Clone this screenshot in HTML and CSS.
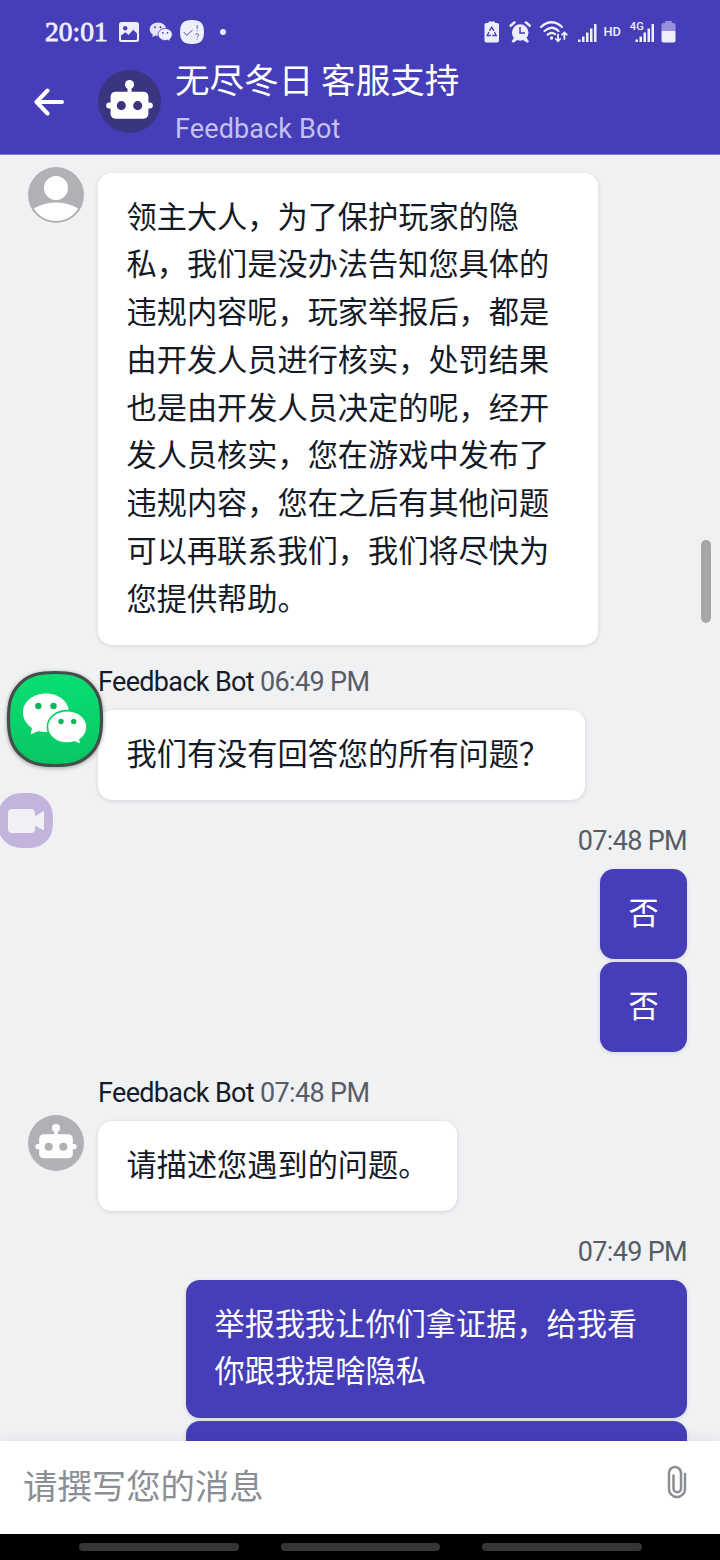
FILE: index.html
```html
<!DOCTYPE html>
<html lang="zh-CN">
<head>
<meta charset="utf-8">
<title>无尽冬日 客服支持</title>
<link rel="stylesheet" href="styles.css">
</head>
<body>
<svg class="defs" width="0" height="0">
  <symbol id="bot" viewBox="0 0 64 64">
    <circle cx="32" cy="32" r="32" fill="currentColor"/>
    <g fill="#fff">
      <circle cx="32" cy="14.8" r="4.6"/>
      <rect x="30" y="15" width="4" height="9"/>
      <rect x="12.8" y="22" width="38.4" height="27.5" rx="5"/>
      <rect x="8.3" y="33" width="47.4" height="6" rx="3"/>
    </g>
    <circle cx="23.7" cy="36.2" r="4.6" fill="currentColor"/>
    <circle cx="40.3" cy="36.2" r="4.6" fill="currentColor"/>
  </symbol>
</svg>
<div class="app">
  <header class="header">
    <div class="status">
      <div class="status-left">
        <span class="clock">20:01</span>
        <svg class="i-photo" width="20" height="20" viewBox="0 0 20 20"><rect width="20" height="20" rx="2.5" fill="#efeefb"/><circle cx="6.2" cy="6.3" r="2.2" fill="#453eb8"/><path d="M2 13.5l4.5-3.2 3 2.6 4.800-5.100 3.700 3.800V17a1 1 0 0 1-1 1H3a1 1 0 0 1-1-1z" fill="#453eb8"/></svg>
        <svg class="i-chat" width="24" height="20" viewBox="0 0 24 20"><path d="M9 .5c4.600 0 8.300 3 8.300 6.800S13.600 14 9 14c-1 0-1.900-.1-2.700-.4L3.300 15.300 3.800 12.500C1.900 11.300.700 9.400.700 7.300.700 3.500 4.400.5 9 .5z" fill="#e5e3f8"/><path d="M16.200 6.500c3.900 0 7.100 2.700 7.100 6 0 1.900-1 3.500-2.500 4.600l.4 2.400-2.600-1.400c-.8.3-1.600.4-2.400.4-3.900 0-7.100-2.700-7.100-6s3.200-6 7.100-6z" fill="#efeefb" stroke="#453eb8" stroke-width=".8"/><g fill="#453eb8"><circle cx="6" cy="5.300" r="1"/><circle cx="11.500" cy="5.300" r="1"/><circle cx="13.900" cy="10.800" r=".9"/><circle cx="18.500" cy="10.800" r=".9"/></g></svg>
        <svg class="i-check" width="24" height="24" viewBox="0 0 24 24"><path d="M12 0C20.500 0 24 3.500 24 12S20.500 24 12 24 0 20.500 0 12 3.500 0 12 0z" fill="#efeefb"/><path d="M3.700 12l3 3.300L12.500 10" fill="none" stroke="#55509f" stroke-width="1"/><path d="M17.200 5v4M17.200 10.300v1M15.300 14.800c.3-1.500 3.500-1.300 3.200.4-.2 1-1.300 1-1.300 2.200M17.200 18.500v1" fill="none" stroke="#55509f" stroke-width=".9"/></svg>
        <i class="dot"></i>
      </div>
      <svg class="status-right" width="196" height="26" viewBox="0 0 196 26">
        <g fill="#efeefb">
          <path d="M8.500 1.500h6.500v1.500h2.300a1.700 1.700 0 0 1 1.700 1.700V20.500a2 2 0 0 1-2 2H6.500a2 2 0 0 1-2-2V4.700a1.700 1.700 0 0 1 1.700-1.700h2.300z"/>
          <circle cx="40.200" cy="12.500" r="8.300"/>
          <path d="M30.600 7l5.200-4.500-1.600-1-4.600 3.800zM49.800 7l-5.200-4.500 1.600-1 4.600 3.800zM34.500 17.500l-2.500 4 1.500.8 4-2.800zM46 17.500l2.500 4-1.500.8-4-2.800z" stroke="#efeefb" stroke-width=".8"/>
        </g>
        <path d="M9.400 10.800l2.300-3.500 2.300 3.500M8.900 12L7.200 15.500h3.600M14.500 12l1.700 3.500h-3.800" fill="none" stroke="#453eb8" stroke-width="1.300"/>
        <path d="M40 7v6h5" fill="none" stroke="#453eb8" stroke-width="1.500"/>
        <g fill="none" stroke="#efeefb" stroke-width="2.200" stroke-linecap="round">
          <path d="M61 7q10.500-9.500 21 0M64.500 11q7.500-6.500 14 0M67.700 14.700q4-3.300 7.300-.5"/>
          <path d="M78 14.500v6.500M75.800 19l2.200 2.300 2.200-2.300M84.400 19v-6.500M82.100 14.700l2.300-2.300 2.300 2.300" stroke-width="1.800"/>
        </g>
        <circle cx="71.500" cy="18" r="1.700" fill="#efeefb"/>
        <g fill="#efeefb">
          <rect x="98" y="19.500" width="2.500" height="2.500"/><rect x="102" y="16.500" width="2.500" height="5.500"/><rect x="106" y="12.500" width="2.500" height="9.500"/><rect x="110" y="8.500" width="2.500" height="13.500"/><rect x="114" y="4" width="2.500" height="18"/>
          <rect x="155.500" y="19.500" width="2.500" height="2.500"/><rect x="159.500" y="16.500" width="2.500" height="5.500"/><rect x="163.500" y="12.500" width="2.500" height="9.500"/><rect x="167.500" y="8.500" width="2.500" height="13.500"/><rect x="171.500" y="4" width="2.500" height="18"/>
          <path d="M181.500 11h14v9.500a2 2 0 0 1-2 2H183.500a2 2 0 0 1-2-2z"/>
        </g>
        <path d="M185.300 1h6.500V3h2a1.800 1.800 0 0 1 1.700 1.800V11H181.500V4.800a1.800 1.800 0 0 1 1.800-1.800H185.300z" fill="#9691da"/>
        <text class="net" x="123.500" y="16" font-size="12.800">HD</text>
        <text class="net" x="149.800" y="10" font-size="11.200">4G</text>
      </svg>
    </div>
    <div class="title-bar">
      <svg class="back" width="30" height="28" viewBox="0 0 30 28"><path d="M28 14H3M13.500 2.500L2.500 14l11 11.500" fill="none" stroke="#fff" stroke-width="4" stroke-linecap="round" stroke-linejoin="round"/></svg>
      <svg class="head-bot"><use href="#bot"/></svg>
      <div class="titles">
        <h1 class="title">无尽冬日 客服支持</h1>
        <p class="subtitle">Feedback Bot</p>
      </div>
    </div>
  </header>

  <main class="chat">
    <section class="group first">
      <svg class="avatar" viewBox="0 0 56 56"><defs><clipPath id="c"><circle cx="28" cy="28" r="26"/></clipPath></defs><circle cx="28" cy="28" r="28" fill="#afb1b5"/><circle cx="28" cy="21" r="12" fill="#fff"/><ellipse cx="28" cy="54" rx="30" ry="18.500" fill="#fff" clip-path="url(#c)"/></svg>
      <div class="bubble long">领主大人，为了保护玩家的隐<br>私，我们是没办法告知您具体的<br>违规内容呢，玩家举报后，都是<br>由开发人员进行核实，处罚结果<br>也是由开发人员决定的呢，经开<br>发人员核实，您在游戏中发布了<br>违规内容，您在之后有其他问题<br>可以再联系我们，我们将尽快为<br>您提供帮助。</div>
    </section>
    <section class="group-in second">
      <div class="meta"><span class="name">Feedback Bot</span> 06:49 PM</div>
      <div class="bubble question">我们有没有回答您的所有问题？</div>
    </section>
    <section class="group-out">
      <div class="meta">07:48 PM</div>
      <div class="bubble mine">否</div>
      <div class="bubble mine">否</div>
    </section>
    <section class="group-in">
      <div class="meta"><span class="name">Feedback Bot</span> 07:48 PM</div>
      <div class="row">
        <svg class="avatar bot-avatar"><use href="#bot"/></svg>
        <div class="bubble describe">请描述您遇到的问题。</div>
      </div>
    </section>
    <section class="group-out">
      <div class="meta">07:49 PM</div>
      <div class="bubble mine wide">举报我我让你们拿证据，给我看<br>你跟我提啥隐私</div>
      <div class="bubble mine wide"></div>
    </section>
  </main>

  <footer class="composer">
    <span class="placeholder">请撰写您的消息</span>
    <svg class="clip" width="20" height="34" viewBox="0 0 20 34"><path d="M18 9v15a8 8 0 0 1-16 0V8a6 6 0 0 1 12 0v15.500a3.200 3.200 0 0 1-7.500 0V10.500" fill="none" stroke="#8b8e93" stroke-width="2.500" stroke-linecap="round"/></svg>
  </footer>
  <nav class="nav"><i></i><i></i><i></i></nav>

  <i class="scroll-thumb"></i>
  <svg class="float-wechat" width="112" height="112" viewBox="0 0 112 112">
    <defs><linearGradient id="g" x1="0" y1="0" x2="0" y2="1"><stop offset="0" stop-color="#08e073"/><stop offset="1" stop-color="#09c663"/></linearGradient></defs>
    <path d="M56 9.500C72 9.500 82.200 11.800 91.200 20.800S102.500 40 102.500 56 100.200 82.200 91.200 91.200 72 102.500 56 102.500 29.800 100.200 20.800 91.200 9.500 72 9.500 56 11.800 29.800 20.800 20.800 40 9.500 56 9.500z" fill="url(#g)" stroke="#464c49" stroke-width="3.200"/>
    <path d="M47 30.500c13 0 23 8.300 23 19S60 69 47 69c-2.700 0-5.300-.4-7.600-1.100L31.500 71.500l1.500-6.600C27.300 61.200 24 55.800 24 49.500c0-10.700 10-19 23-19z" fill="#fff"/>
    <path d="M68.200 47.700c11.300 0 19.800 7.300 19.800 16.200 0 5.200-2.700 9.700-7 12.700l1.300 5.200-6.700-2.800c-2.300.7-4.800 1.100-7.400 1.100-11.300 0-19.800-7.300-19.800-16.200s8.500-16.200 19.800-16.200z" fill="#fff" stroke="#09cf68" stroke-width="1.700"/>
    <g fill="#0bb65c"><circle cx="39.300" cy="43" r="3.200"/><circle cx="54.500" cy="43" r="3.200"/><circle cx="62" cy="58.500" r="2.700"/><circle cx="74.700" cy="58.500" r="2.700"/></g>
  </svg>
  <svg class="float-rec" width="53" height="55" viewBox="0 0 53 55"><path d="M25.500 0C35 0 41 1.400 46.300 6.700S53 18 53 27.500 51.600 43 46.300 48.300 35 55 25.500 55 10 53.600 4.700 48.300 -2 37 -2 27.500 -.6 12 4.700 6.700 16 0 25.500 0z" fill="#c3b4dd"/><path d="M12 16h19a4 4 0 0 1 4 4v3.200l8-4.700a.6.6 0 0 1 1 .5v17.500a.6.6 0 0 1-1 .5l-8-4.500V36a4 4 0 0 1-4 4H12a4 4 0 0 1-4-4V20a4 4 0 0 1 4-4z" fill="#f1f0f5"/></svg>
</div>
</body>
</html>
```
FILE: styles.css
```css
* { box-sizing: border-box; }
body { margin: 0; font-family: Roboto, "Noto Sans CJK SC", sans-serif; }
i { display: block; }
.defs { position: absolute; }
.app {
  position: relative;
  display: flex;
  flex-direction: column;
  width: 720px;
  height: 1560px;
  overflow: hidden;
  background: #eff1f3;
}

.header { flex: none; height: 155px; background: #453eb8; border-bottom: 1px solid #857fd0; }
.status { display: flex; justify-content: space-between; height: 64px; padding: 0 44px 0 45px; }
.status-left { display: flex; align-items: center; height: 64px; color: #efeefb; }
.clock { width: 63px; margin-right: 11px; font: 27.5px "Liberation Serif", serif; -webkit-text-stroke: .8px #efeefb; white-space: nowrap; }
.i-photo { margin-right: 10px; }
.i-chat { margin-right: 7px; }
.dot { width: 6px; height: 6px; margin-left: 16px; border-radius: 50%; background: #efeefb; }
.status-right { margin-top: 20px; }
.net { fill: #efeefb; font-family: Roboto, sans-serif; font-weight: 500; }
.title-bar { display: flex; align-items: flex-start; padding-left: 34px; }
.back { margin-top: 24px; }
.head-bot { width: 63px; height: 63px; margin: 6px 14px 0 34px; color: #393581; }
.titles { margin-top: -11px; }
.title { margin: 0; color: #fff; font: 400 34.600px/50px "Noto Sans CJK SC", sans-serif; white-space: nowrap; }
.subtitle { margin: 10px 0 0; color: #c5c1f0; font-size: 27px; line-height: 32px; letter-spacing: .12px; }

.chat { flex: none; display: flex; flex-direction: column; height: 1286px; padding: 18px 33px 0 28px; overflow: hidden; }
.group, .row { display: flex; align-items: flex-start; gap: 14px; }
.avatar { flex: none; width: 56px; height: 56px; margin-top: -6px; }
.bot-avatar { color: #afb1b5; }
.group-in, .group-out { display: flex; flex-direction: column; margin-top: 25px; }
.group-in { padding-left: 70px; }
.second { margin-top: 21px; }
.row { margin-left: -70px; }
.row .avatar { margin-top: -6px; }
.group-out { align-items: flex-end; gap: 3px; }
.group-out .meta { margin-bottom: 9px; }
.meta { height: 32px; margin-bottom: 12px; color: #575c66; font-size: 27px; line-height: 32px; letter-spacing: -.66px; white-space: nowrap; }
.name { color: #161b28; }
.bubble {
  padding: 18.500px 28px 0 28.500px;
  border-radius: 14px;
  background: #fff;
  box-shadow: 0 1px 4px rgba(20, 25, 40, .13);
  color: #151a27;
  font: 400 30.200px/47.750px "Noto Sans CJK SC", sans-serif;
  white-space: nowrap;
}
.long { width: 500px; height: 472px; }
.question { width: 487px; height: 90px; }
.describe { width: 359px; height: 90px; }
.mine { width: 87px; height: 90px; background: #453eb8; color: #fff; }
.wide { width: 501px; height: 138px; flex: none; }

.composer {
  position: relative;
  display: flex;
  align-items: center;
  justify-content: space-between;
  flex: none;
  height: 93px;
  padding: 0 33px 0 23px;
  background: #fff;
  box-shadow: 0 -1px 14px rgba(20, 25, 40, .07);
}
.placeholder { margin-top: -7px; color: #8b8e94; font: 400 34.400px/50px "Noto Sans CJK SC", sans-serif; }
.clip { margin-top: -11px; }
.nav { position: relative; flex: none; display: flex; gap: 42px; height: 26px; padding: 9px 0 0 79px; background: #000; }
.nav i { width: 159.500px; height: 8px; border-radius: 4px; background: #363636; }

.scroll-thumb { position: absolute; left: 701px; top: 540px; width: 10px; height: 83px; border-radius: 5px; background: #a5a6a8; }
.float-wechat { position: absolute; left: -1px; top: 663px; filter: drop-shadow(0 1px 2px rgba(0, 0, 0, .35)); }
.float-rec { position: absolute; left: 0; top: 793px; }
```
